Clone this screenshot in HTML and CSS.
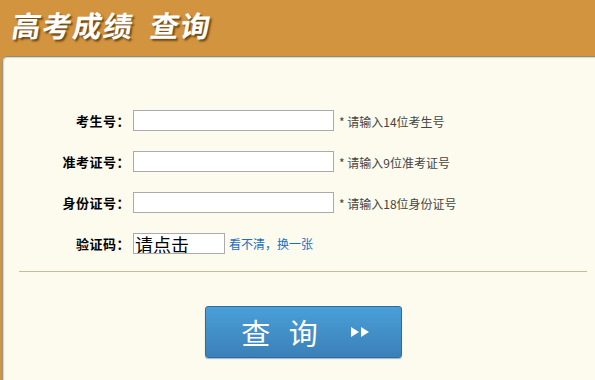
FILE: index.html
```html
<!DOCTYPE html>
<html>
<head>
	<meta charset="utf-8">
	<title>高考成绩查询</title>
	<link rel="stylesheet" href="styles.css">
</head>
<body>
	<div class="header">
		<h1>高考成绩&nbsp;&nbsp;查询</h1>
	</div>

	<div class="panel">
		<form class="query-form">
			<div class="row">
				<label class="label">考生号：</label>
				<input class="field" type="text">
				<span class="hint">* 请输入14位考生号</span>
			</div>
			<div class="row">
				<label class="label">准考证号：</label>
				<input class="field" type="text">
				<span class="hint">* 请输入9位准考证号</span>
			</div>
			<div class="row">
				<label class="label">身份证号：</label>
				<input class="field" type="text">
				<span class="hint">* 请输入18位身份证号</span>
			</div>
			<div class="row">
				<label class="label">验证码：</label>
				<input class="field captcha" type="text" value="请点击">
				<a class="refresh" href="#">看不清，换一张</a>
			</div>

			<hr class="divider">

			<div class="actions">
				<button class="submit" type="button">
					<span class="submit-text">查&nbsp;询</span>
					<svg class="submit-arrows" width="20" height="12" viewBox="0 0 20 12">
						<polygon points="0,1 8,6 0,11" fill="#fff"/>
						<polygon points="10,1 18,6 10,11" fill="#fff"/>
					</svg>
				</button>
			</div>
		</form>
	</div>
</body>
</html>
```

FILE: styles.css
```css
body {
	margin: 0;
	padding: 0;
	background-color: #d3943f;
	font-family: "Noto Sans CJK SC", "Noto Sans", sans-serif;
	overflow: hidden;
}

.header {
	height: 56px;
	padding-left: 13px;
}

.header h1 {
	display: inline-block;
	margin: 0;
	padding-top: 5px;
	font-size: 29px;
	line-height: 38px;
	font-weight: bold;
	color: #fff;
	letter-spacing: 1.5px;
	transform: skewX(-9deg);
	text-shadow: 2px 2px 2px #6b4513;
}

.panel {
	margin-left: 2px;
	height: 324px;
	background-color: #fdfaee;
	border-top: 1px solid #8e8a80;
	border-left: 1px solid #9a9488;
	border-top-left-radius: 5px;
	box-shadow: inset 1px 1px 1px #d8d4c8;
}

.query-form {
	padding-top: 53px;
}

.row {
	display: flex;
	align-items: center;
	height: 21px;
	margin-bottom: 20px;
}

.label {
	width: 127px;
	padding-right: 3px;
	text-align: right;
	font-size: 13px;
	font-weight: bold;
	letter-spacing: 0.5px;
	color: #000;
}

.field {
	box-sizing: border-box;
	width: 201px;
	height: 21px;
	margin: 0;
	padding: 0 2px;
	border: 1px solid #ababab;
	background-color: #fff;
	outline: none;
}

.hint {
	margin-left: 5px;
	padding-top: 2px;
	font-size: 12px;
	color: #444;
}

.captcha {
	width: 92px;
	padding: 0 1px;
	font-family: "Noto Sans CJK SC", sans-serif;
	font-size: 18px;
	line-height: 19px;
	color: #000;
}

.refresh {
	margin-left: 4px;
	font-size: 12px;
	color: #1a6fc4;
	text-decoration: none;
}

.divider {
	margin: -3px 8px 0 16px;
	border: none;
	border-top: 1px solid #c4bc98;
	height: 0;
}

.actions {
	margin: 34px 8px 0 16px;
	display: flex;
	justify-content: center;
}

.submit {
	display: flex;
	align-items: center;
	justify-content: center;
	width: 197px;
	height: 52px;
	padding: 0 0 0 6px;
	border: 1px solid #2f6c9c;
	border-radius: 3px;
	background: linear-gradient(#4a9fd8, #3b80b8);
	box-shadow: 0 1px 1px #9bb6cc;
	color: #fff;
	cursor: pointer;
}

.submit-text {
	font-size: 29px;
	letter-spacing: 6px;
	font-family: "Noto Sans CJK SC", sans-serif;
	font-weight: normal;
}

.submit-arrows {
	margin-left: 27px;
}
```
